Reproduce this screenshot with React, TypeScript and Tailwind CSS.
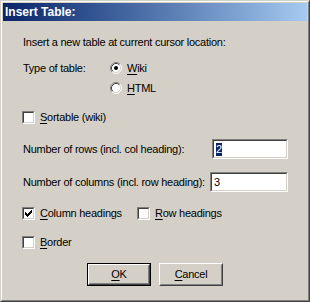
import React from 'react';

const FONT = { fontFamily: '"Liberation Sans", Arial, sans-serif' };

// Win2000-style sunken checkbox
const CheckBox: React.FC<{ checked?: boolean }> = ({ checked }) => (
  <div className="w-[13px] h-[13px] shrink-0 border border-t-[#808080] border-l-[#808080] border-b-white border-r-white">
    <div className="w-full h-full bg-white border border-t-[#404040] border-l-[#404040] border-b-[#d4d0c8] border-r-[#d4d0c8] flex items-center justify-center">
      {checked && (
        <svg width="7" height="7" viewBox="0 0 7 7" shapeRendering="crispEdges">
          <path
            fill="#000"
            d="M6 0h1v3h-1zM5 1h1v3h-1zM4 2h1v3h-1zM3 3h1v3h-1zM2 4h1v3h-1zM1 3h1v3h-1zM0 2h1v3h-1z"
          />
        </svg>
      )}
    </div>
  </div>
);

const Radio: React.FC<{ checked?: boolean }> = ({ checked }) => (
  <svg width="12" height="12" viewBox="0 0 12 12" className="shrink-0">
    <circle cx="6" cy="6" r="5" fill="#fff" />
    <path d="M2.11 9.89 A5.5 5.5 0 0 1 9.89 2.11" stroke="#808080" fill="none" />
    <path d="M9.89 2.11 A5.5 5.5 0 0 1 2.11 9.89" stroke="#fff" fill="none" />
    <path d="M2.82 9.18 A4.5 4.5 0 0 1 9.18 2.82" stroke="#404040" fill="none" />
    <path d="M9.18 2.82 A4.5 4.5 0 0 1 2.82 9.18" stroke="#d4d0c8" fill="none" />
    {checked && <circle cx="6" cy="6" r="2" fill="#000" />}
  </svg>
);

// label with underlined access key (first letter)
const Accel: React.FC<{ text: string }> = ({ text }) => (
  <span className="whitespace-nowrap">
    <span className="underline underline-offset-2">{text[0]}</span>
    {text.slice(1)}
  </span>
);

const TextBox: React.FC<{ value: string; selected?: boolean; width: string }> = ({ value, selected, width }) => (
  <div className={`${width} h-[20px] shrink-0 border border-t-[#808080] border-l-[#808080] border-b-white border-r-white`}>
    <div className="w-full h-full bg-white border border-t-[#404040] border-l-[#404040] border-b-[#d4d0c8] border-r-[#d4d0c8] flex items-center pl-[2px]">
      <span className={selected ? 'bg-[#0a246a] text-white leading-[13px]' : 'leading-[13px]'}>{value}</span>
    </div>
  </div>
);

export default function App() {
  return (
    <div
      style={FONT}
      className="w-[310px] h-[302px] bg-[#d4d0c8] border border-t-[#d4d0c8] border-l-[#d4d0c8] border-b-[#404040] border-r-[#404040] text-[11px] leading-[13px] tracking-[-0.25px] text-black select-none"
    >
      <div className="w-full h-full border border-t-white border-l-white border-b-[#808080] border-r-[#808080] p-px flex flex-col">
        {/* title bar */}
        <div className="h-[18px] shrink-0 flex items-center pl-[2px] bg-gradient-to-r from-[#0a246a] to-[#a6caf0]">
          <span className="text-white font-bold text-[12px] tracking-normal">Insert Table:</span>
        </div>

        {/* body */}
        <div className="flex flex-col pl-[19px]">
          <div className="mt-[14px] h-[14px] pl-px flex items-center whitespace-nowrap">
            Insert a new table at current cursor location:
          </div>

          <div className="mt-[9px] h-[20px] flex items-center">
            <div className="w-[88px] pl-px whitespace-nowrap">Type of table:</div>
            <Radio checked />
            <span className="ml-[5px]">
              <Accel text="Wiki" />
            </span>
          </div>
          <div className="h-[20px] flex items-center pl-[88px]">
            <Radio />
            <span className="ml-[5px]">
              <Accel text="HTML" />
            </span>
          </div>

          <div className="mt-[9px] h-[20px] flex items-center">
            <CheckBox />
            <span className="ml-[5px]">
              <Accel text="Sortable (wiki)" />
            </span>
          </div>

          <div className="mt-[12px] h-[20px] flex items-center">
            <div className="w-[190px] shrink-0 pl-px whitespace-nowrap">Number of rows (incl. col heading):</div>
            <TextBox value="2" selected width="w-[76px]" />
          </div>

          <div className="mt-[13px] h-[20px] flex items-center">
            <div className="w-[188px] shrink-0 pl-px whitespace-nowrap">Number of columns (incl. row heading):</div>
            <TextBox value="3" width="w-[78px]" />
          </div>

          <div className="mt-[11px] h-[20px] flex items-center">
            <div className="w-[115px] shrink-0 flex items-center">
              <CheckBox checked />
              <span className="ml-[5px]">
                <Accel text="Column headings" />
              </span>
            </div>
            <CheckBox />
            <span className="ml-[5px]">
              <Accel text="Row headings" />
            </span>
          </div>

          <div className="mt-[9px] h-[20px] flex items-center">
            <CheckBox />
            <span className="ml-[5px]">
              <Accel text="Border" />
            </span>
          </div>
        </div>

        {/* buttons */}
        <div className="mt-[11px] flex justify-center gap-[8px]">
          <div className="w-[64px] h-[23px] border border-black">
            <div className="w-full h-full border border-t-white border-l-white border-b-[#404040] border-r-[#404040]">
              <div className="w-full h-full border border-t-[#d4d0c8] border-l-[#d4d0c8] border-b-[#808080] border-r-[#808080] flex items-center justify-center">
                <Accel text="OK" />
              </div>
            </div>
          </div>
          <div className="w-[64px] h-[23px] border border-t-white border-l-white border-b-[#404040] border-r-[#404040]">
            <div className="w-full h-full border border-t-[#d4d0c8] border-l-[#d4d0c8] border-b-[#808080] border-r-[#808080] flex items-center justify-center">
              <Accel text="Cancel" />
            </div>
          </div>
        </div>
      </div>
    </div>
  );
}
